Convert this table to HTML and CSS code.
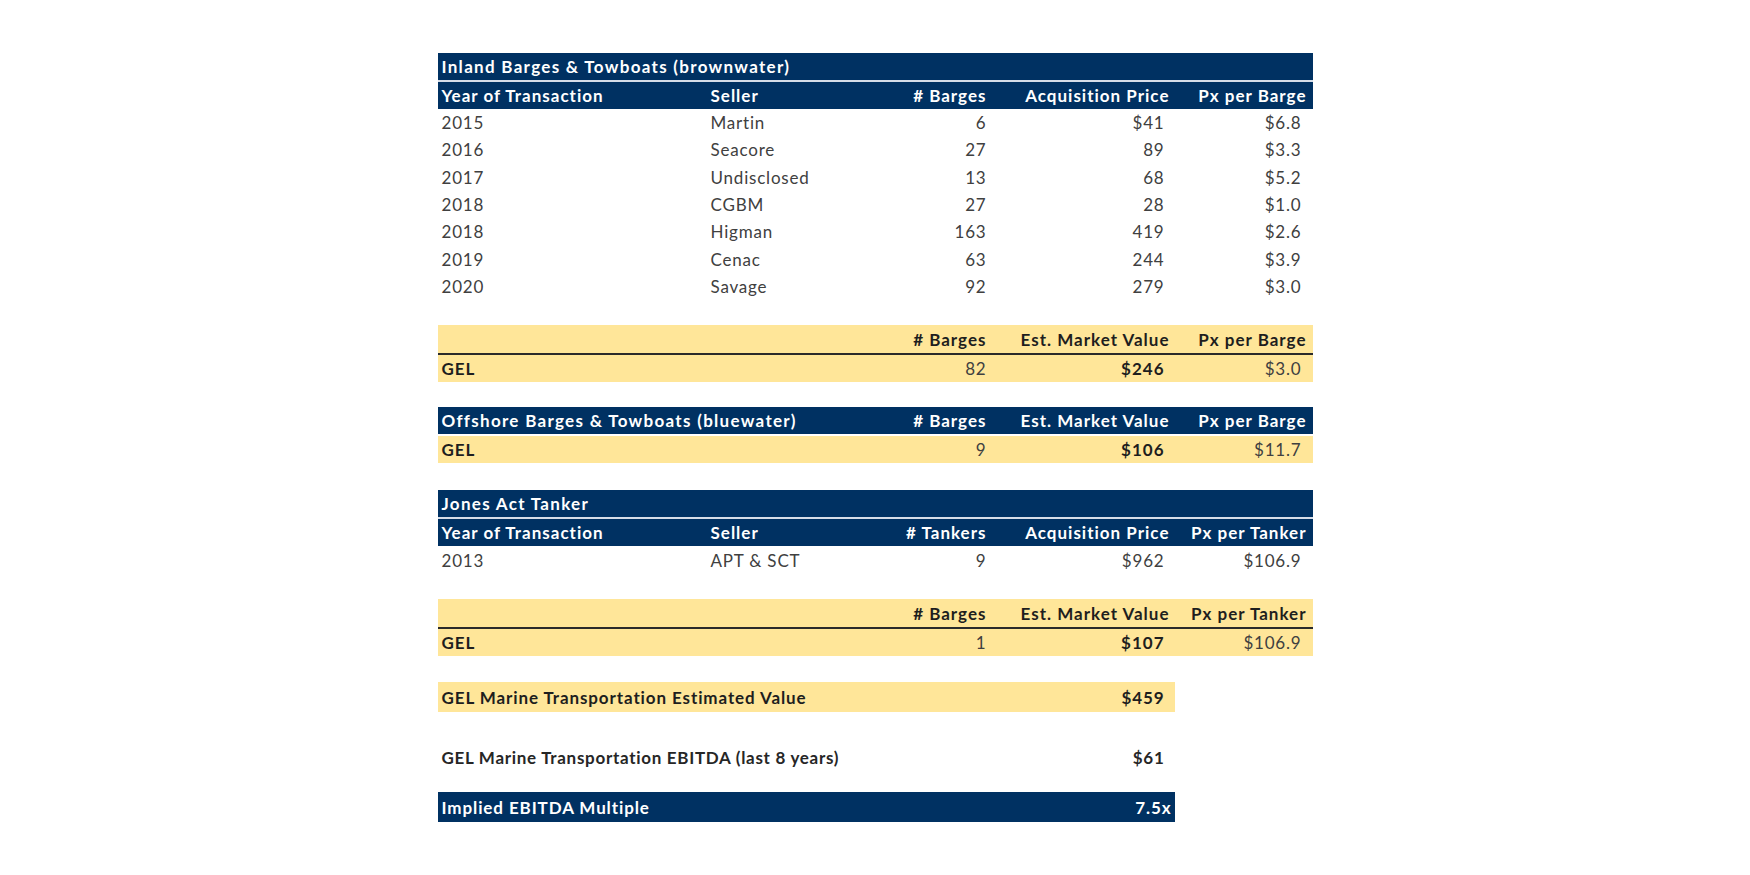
FILE: index.html
```html
<!DOCTYPE html>
<html>
<head>
<meta charset="utf-8">
<link rel="stylesheet" href="styles.css">
<title>GEL Marine Transportation</title>
</head>
<body>
<main class="sheet">
  <section class="block block-inland">
    <div class="row navy title"><div class="cell wide">Inland Barges &amp; Towboats (brownwater)</div></div>
    <div class="row navy head">
      <div class="cell">Year of Transaction</div>
      <div class="cell">Seller</div>
      <div class="cell r">#&nbsp;Barges</div>
      <div class="cell r">Acquisition Price</div>
      <div class="cell r last">Px per Barge</div>
    </div>
    <div class="row data"><div class="cell">2015</div><div class="cell">Martin</div><div class="cell r">6</div><div class="cell r num">$41</div><div class="cell r num2">$6.8</div></div>
    <div class="row data"><div class="cell">2016</div><div class="cell">Seacore</div><div class="cell r">27</div><div class="cell r num">89</div><div class="cell r num2">$3.3</div></div>
    <div class="row data"><div class="cell">2017</div><div class="cell">Undisclosed</div><div class="cell r">13</div><div class="cell r num">68</div><div class="cell r num2">$5.2</div></div>
    <div class="row data"><div class="cell">2018</div><div class="cell">CGBM</div><div class="cell r">27</div><div class="cell r num">28</div><div class="cell r num2">$1.0</div></div>
    <div class="row data"><div class="cell">2018</div><div class="cell">Higman</div><div class="cell r">163</div><div class="cell r num">419</div><div class="cell r num2">$2.6</div></div>
    <div class="row data"><div class="cell">2019</div><div class="cell">Cenac</div><div class="cell r">63</div><div class="cell r num">244</div><div class="cell r num2">$3.9</div></div>
    <div class="row data"><div class="cell">2020</div><div class="cell">Savage</div><div class="cell r">92</div><div class="cell r num">279</div><div class="cell r num2">$3.0</div></div>
  </section>

  <section class="block gap-a">
    <div class="row gold head rule">
      <div class="cell"></div>
      <div class="cell"></div>
      <div class="cell r">#&nbsp;Barges</div>
      <div class="cell r">Est. Market Value</div>
      <div class="cell r last">Px per Barge</div>
    </div>
    <div class="row gold">
      <div class="cell b">GEL</div>
      <div class="cell"></div>
      <div class="cell r">82</div>
      <div class="cell r num b">$246</div>
      <div class="cell r num2">$3.0</div>
    </div>
  </section>

  <section class="block gap-a">
    <div class="row navy head split">
      <div class="cell wide2 ttl">Offshore Barges &amp; Towboats (bluewater)</div>
      <div class="cell r">#&nbsp;Barges</div>
      <div class="cell r">Est. Market Value</div>
      <div class="cell r last">Px per Barge</div>
    </div>
    <div class="row gold">
      <div class="cell b">GEL</div>
      <div class="cell"></div>
      <div class="cell r">9</div>
      <div class="cell r num b">$106</div>
      <div class="cell r num2">$11.7</div>
    </div>
  </section>

  <section class="block gap-b">
    <div class="row navy title"><div class="cell wide">Jones Act Tanker</div></div>
    <div class="row navy head">
      <div class="cell">Year of Transaction</div>
      <div class="cell">Seller</div>
      <div class="cell r">#&nbsp;Tankers</div>
      <div class="cell r">Acquisition Price</div>
      <div class="cell r last">Px per Tanker</div>
    </div>
    <div class="row data tall"><div class="cell">2013</div><div class="cell">APT &amp; SCT</div><div class="cell r">9</div><div class="cell r num">$962</div><div class="cell r num2">$106.9</div></div>
  </section>

  <section class="block gap-a">
    <div class="row gold head rule">
      <div class="cell"></div>
      <div class="cell"></div>
      <div class="cell r">#&nbsp;Barges</div>
      <div class="cell r">Est. Market Value</div>
      <div class="cell r last">Px per Tanker</div>
    </div>
    <div class="row gold">
      <div class="cell b">GEL</div>
      <div class="cell"></div>
      <div class="cell r">1</div>
      <div class="cell r num b">$107</div>
      <div class="cell r num2">$106.9</div>
    </div>
  </section>

  <section class="summary">
    <div class="sum gold-sum"><span class="label">GEL Marine Transportation Estimated Value</span><span class="val">$459</span></div>
    <div class="sum plain-sum"><span class="label">GEL Marine Transportation EBITDA (last 8 years)</span><span class="val">$61</span></div>
    <div class="sum navy-sum"><span class="label">Implied EBITDA Multiple</span><span class="val v2">7.5x</span></div>
  </section>
</main>
</body>
</html>
```

FILE: styles.css
```css
* { box-sizing: border-box; }

html, body {
  margin: 0;
  padding: 0;
  background: #ffffff;
}

body {
  font-family: Lato, "Liberation Sans", sans-serif;
  font-size: 17px;
  color: #404040;
}

.sheet {
  width: 875px;
  margin: 0 auto;
  padding-top: 53px;
}

.block { display: flex; flex-direction: column; }
.gap-a { margin-top: 25px; }
.gap-b { margin-top: 27px; }

.row {
  display: grid;
  grid-template-columns: 269px 180px 104px 183px 139px;
  height: 27px;
  align-items: center;
}

.cell {
  padding-left: 4px;
  padding-right: 4px;
  white-space: nowrap;
  letter-spacing: 0.8px;
}

.cell.r { text-align: right; }
.cell.last { padding-right: 6px; }
.cell.num { padding-right: 9px; }
.cell.num2 { padding-right: 11px; }
.cell.wide { grid-column: 1 / -1; }
.cell.wide2 { grid-column: 1 / 3; }
.b { font-weight: 700; color: #1e1e1e; letter-spacing: 1px; }

.navy {
  background: #003162;
  color: #ffffff;
  font-weight: 700;
}

.navy .cell, .gold.head .cell { letter-spacing: 1px; }
.navy .cell.wide, .navy .cell.ttl { letter-spacing: 1.3px; }

.navy.title {
  height: 29px;
  border-bottom: 2px solid #d6dde8;
}

.navy.split { border-bottom: 2px solid #ffffff; height: 29px; }

.data { height: 27.3px; color: #404040; }
.data.tall { height: 28px; }

.gold {
  background: #ffe699;
  color: #404040;
}

.gold.head { font-weight: 700; color: #1e1e1e; }
.gold.rule {
  border-bottom: 2px solid #2a2a2a;
  height: 30px;
}

.summary {
  width: 737px;
  margin-top: 26px;
  display: flex;
  flex-direction: column;
}

.sum {
  display: flex;
  justify-content: space-between;
  align-items: center;
  height: 30px;
  padding-left: 4px;
  font-weight: 700;
  letter-spacing: 0.9px;
}

.sum .val { padding-right: 10px; }
.sum .val.v2 { padding-right: 3px; }

.gold-sum { background: #ffe699; color: #1e1e1e; }
.plain-sum { color: #262626; margin-top: 31px; height: 28px; letter-spacing: 0.7px; }
.navy-sum { background: #003162; color: #ffffff; margin-top: 21px; }
```
